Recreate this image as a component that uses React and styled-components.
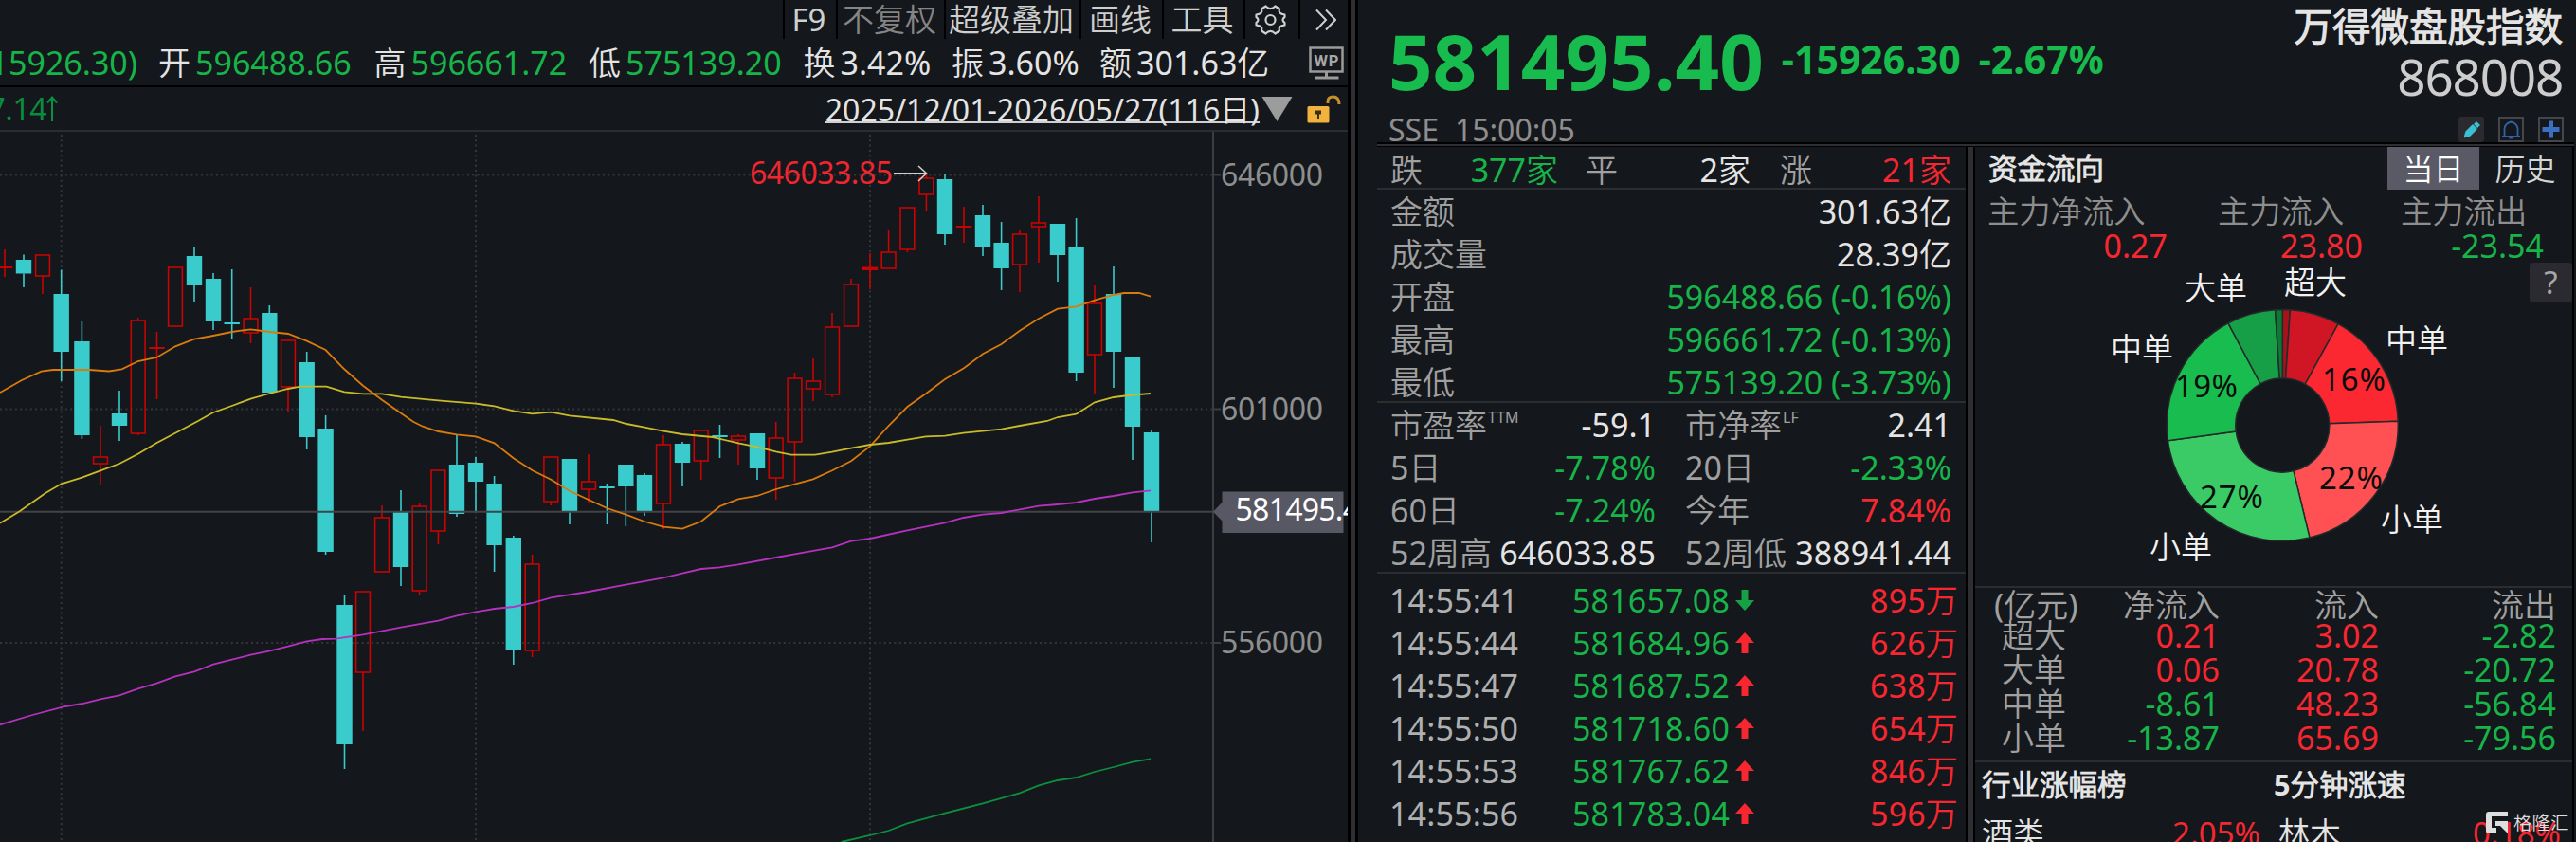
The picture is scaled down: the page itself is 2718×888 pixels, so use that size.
import React from "react";
import styled, { createGlobalStyle } from "styled-components";

const GREEN = "#17b44a";
const RED = "#f62730";
const WHITE = "#e4e4e4";
const GRAY = "#a0a0a0";
const DIM = "#8e8e8e";
const LINE = "#2c2d31";

const GlobalStyle = createGlobalStyle`
  html, body {
    margin: 0;
    padding: 0;
    background: #14171b;
  }

  * {
    box-sizing: border-box;
  }
`;

const Screen = styled.div`
  width: 2718px;
  height: 888px;

  display: flex;
  overflow: hidden;

  background: #14171b;
  color: ${WHITE};
  font-family: "Noto Sans", "Noto Sans CJK SC DemiLight", "Noto Sans CJK SC", sans-serif;
  font-size: 34px;
  font-weight: 400;
  line-height: 1;
  white-space: nowrap;
`;

const Text = styled.span`
  color: ${(props) => props.$color || "inherit"};
`;

/* ---------- left side: chart ---------- */

const ChartPane = styled.section`
  width: 1422px;
  flex: none;

  display: flex;
  flex-direction: column;
`;

const ToolBar = styled.div`
  height: 42px;

  display: flex;
  justify-content: flex-end;
`;

const Tool = styled.div`
  width: ${(props) => props.$w}px;
  height: 41px;
  padding-right: 3px;

  display: flex;
  align-items: center;
  justify-content: center;

  border-left: 2px solid #000000;
  color: ${(props) => (props.$off ? "#858585" : "#cfcfcf")};
  font-size: 33px;
`;

const InfoBar = styled.div`
  height: 50px;

  display: grid;
  grid-template-columns: 145px 227.5px 226.5px 226.5px 156.5px 156px 200px 1fr;
  align-items: center;

  border-bottom: 2px solid #000000;
`;

const InfoCell = styled.div`
  padding-left: ${(props) => (props.$tail ? 0 : 22)}px;

  display: flex;
  justify-content: ${(props) => (props.$tail ? "flex-end" : "flex-start")};
  gap: 5px;
`;

const IconCell = styled.div`
  padding-right: 4px;

  display: flex;
  justify-content: flex-end;
`;

const RangeBar = styled.div`
  height: 47px;
  padding-right: 7px;

  display: flex;
  align-items: center;

  border-bottom: 2px solid ${LINE};
  font-size: 32px;
`;

const Average = styled.div`
  width: 61px;
  margin-right: auto;

  display: flex;
  align-items: center;
  justify-content: flex-end;

  color: #0a8c3e;
  font-size: 32px;
  letter-spacing: -0.5px;

  svg {
    flex: none;
  }
`;

const DateRange = styled.div`
  height: 29px;
  margin-top: 1px;

  border-bottom: 2px solid #d0d0d0;
  letter-spacing: 0.05px;
  line-height: 30px;
`;

const Rule = styled.div`
  width: ${(props) => (props.$thin ? 10 : 11)}px;
  flex: none;

  background: #2f2f33;
  border: solid #000000;
  border-width: 0 ${(props) => (props.$thin ? 2 : 3)}px 0 3px;
`;

/* ---------- right side: quote ---------- */

const QuotePane = styled.section`
  flex: 1;

  display: flex;
  flex-direction: column;
`;

const QuoteHead = styled.header`
  height: 155px;
  padding: 0 14px 0 32px;

  display: flex;
  justify-content: space-between;
`;

const HeadLine = styled.div`
  height: 5px;
  margin: -5px 2px 0 20px;

  border: solid #000000;
  border-width: 2px 0 1px;
  background: #2f2f33;
`;

const PriceLine = styled.div`
  height: 120px;
  padding-top: 18px;

  display: flex;
  gap: 19px;

  color: #18bb4d;
  font-weight: 700;
`;

const LastPrice = styled.div`
  font-size: 81.5px;
  line-height: 92px;
`;

const Change = styled.div`
  font-size: 41px;
  line-height: 89px;
`;

const Exchange = styled.div`
  display: flex;
  gap: 17px;

  color: ${DIM};
  font-size: 32px;
  line-height: 34px;
`;

const NameBlock = styled.div`
  display: flex;
  flex-direction: column;
  align-items: flex-end;
`;

const IndexName = styled.div`
  margin-top: 7px;

  font-size: 40.5px;
  font-weight: 700;
  line-height: 42px;
`;

const IndexCode = styled.div`
  margin: 4px 0 14px;

  color: #cdcdcd;
  font-size: 53px;
  letter-spacing: -1.2px;
  line-height: 56px;
`;

const HeadIcons = styled.div`
  margin-right: -1px;

  display: flex;
  gap: 15px;
`;

const HeadIcon = styled.div`
  width: 27px;
  height: 27px;

  display: flex;
  align-items: center;
  justify-content: center;

  background: ${(props) => (props.$filled ? "#2a2a2f" : "transparent")};
  border: ${(props) => (props.$filled ? "none" : "2px solid #46464a")};
  border-radius: ${(props) => (props.$filled ? 3 : 0)}px;
`;

const QuoteBody = styled.div`
  flex: 1;
  min-height: 0;

  display: flex;
`;

const Detail = styled.div`
  width: 641px;
  padding-left: 20px;
  flex: none;
`;

const DetailGroup = styled.div`
  height: ${(props) => props.$h}px;
  padding-top: ${(props) => props.$top || 0}px;

  border-bottom: ${(props) => (props.$last ? "none" : "2px solid " + LINE)};
`;

const DetailRow = styled.div`
  height: 45px;
  padding: 0 15px 0 14px;

  display: grid;
  grid-template-columns: ${(props) => props.$cols || "auto auto"};
  column-gap: ${(props) => props.$gap || 0}px;
  align-items: center;
`;

const Cell = styled.span`
  display: flex;
  justify-content: ${(props) => (props.$right ? "flex-end" : "flex-start")};

  color: ${(props) => props.$color || GRAY};
`;

const Pair = styled.div`
  display: flex;
  justify-content: space-between;
`;

const Sup = styled.sup`
  margin-left: 1px;
  align-self: flex-start;

  font-size: 16px;
  line-height: 18px;
`;

const TickRow = styled.div`
  height: 45px;
  padding: 0 8px 0 13px;

  display: grid;
  grid-template-columns: 193px 166px 1fr auto;
  align-items: center;

  color: #b0b0b0;
  letter-spacing: 0.15px;
`;

const Arrow = styled.svg`
  width: 20px;
  height: 22px;
  margin-left: 6px;

  fill: ${(props) => (props.$down ? "#17a046" : RED)};
  transform: ${(props) => (props.$down ? "rotate(180deg)" : "none")};
`;

/* ---------- fund flow column ---------- */

const Flow = styled.div`
  margin-right: 2px;
  flex: 1;

  display: flex;
  flex-direction: column;

  border-right: 2px solid #000000;
`;

const FlowHead = styled.div`
  height: 45px;
  padding: 0 1px 0 14px;

  display: flex;
  align-items: center;
`;

const FlowTitle = styled.div`
  flex: 1;

  font-size: 30.5px;
  font-weight: 700;
`;

const Tab = styled.div`
  width: 97px;
  height: 45px;

  background: ${(props) => (props.$active ? "#5a5a66" : "transparent")};
  color: ${(props) => (props.$active ? "#ffffff" : "#d6d6d6")};
  font-size: 32px;
  line-height: 45px;
  text-align: center;
`;

const FlowSums = styled.div`
  height: 77px;
  padding: 4px 30px 0 13px;

  display: grid;
  grid-template-columns: 190px 206px 1fr;
  grid-auto-rows: 73px;
  line-height: 37px;
`;

const FlowSum = styled.div`
  display: flex;
  flex-direction: column;
`;

const SumLabel = styled.span`
  padding-left: ${(props) => props.$indent}px;

  color: ${DIM};
  font-size: 33.3px;
`;

const SumValue = styled.span`
  color: ${(props) => props.$color};
  text-align: right;
`;

const DonutBox = styled.div`
  height: 341px;

  display: flex;
`;

const Help = styled.div`
  width: 45px;
  height: 42px;
  margin-left: -45px;

  background: #2a2a30;
  border-radius: 4px;
  color: #a6a6a6;
  font-size: 33px;
  line-height: 42px;
  text-align: center;
`;

const FlowTable = styled.div`
  height: 186px;
  padding: 4px 17px 0 20px;

  display: grid;
  grid-template-columns: 76px 162px 168px 1fr;
  grid-template-rows: 28px 36px 36px 36px 36px;
  align-items: center;

  border: solid ${LINE};
  border-width: 2px 0;
`;

const Board = styled.div`
  padding: 6px 12px 0 7px;

  display: grid;
  grid-template-columns: 294px 14px 1fr;
  font-size: 33px;
  line-height: 64px;
`;

const BoardTitle = styled.div`
  grid-column: ${(props) => (props.$first ? "1" : "3")};
  height: 37px;

  font-size: 30.5px;
  font-weight: 700;
  line-height: 34px;
`;

const BoardItem = styled.div`
  grid-column: ${(props) => (props.$first ? "1" : "3")};
  height: 30px;
  padding-left: ${(props) => (props.$first ? 0 : 5)}px;

  display: flex;
  justify-content: space-between;
`;

const Watermark = styled.div`
  position: absolute;
  left: 2622px;
  top: 855px;

  display: flex;
  align-items: center;
  gap: 5px;

  color: #dedede;
  font-size: 19.5px;
  font-weight: 500;
  line-height: 24px;
`;

// x, high, body top, body bottom, low, rising
const CANDLES = [
  [5, 263, 282, 282, 292, 1],
  [25, 268.5, 274, 288.5, 303, 0],
  [45, 269, 269, 291, 310, 1],
  [64.7, 284.5, 310, 371, 402, 0],
  [86.4, 339, 360, 459, 463, 0],
  [106, 449, 482, 489, 511, 1],
  [126, 412, 436, 449, 465, 0],
  [145.7, 335, 338, 457, 459, 1],
  [165.5, 350, 367, 367, 421, 1],
  [185, 282, 282, 344, 344, 1],
  [205, 261, 270, 301, 319, 0],
  [225, 288, 294, 339, 348, 0],
  [244.7, 284, 341, 341, 357, 0],
  [264.5, 303, 336, 351, 362, 1],
  [284.3, 322, 330, 414, 414, 0],
  [304, 357, 359, 408, 434, 1],
  [323.7, 371, 382, 461, 474, 0],
  [343.6, 438, 452, 582, 585, 0],
  [363.5, 628, 638, 785, 811, 0],
  [383, 624, 624, 709, 771, 1],
  [403, 533, 546, 603, 603, 1],
  [423, 517, 540, 598, 618, 0],
  [442.6, 530, 534, 623, 628, 1],
  [462.4, 496, 496, 560, 574, 1],
  [482, 458, 490, 542, 545, 0],
  [502, 482, 488, 508, 539, 0],
  [521.6, 502, 510, 575, 603, 0],
  [541.8, 565, 567, 686, 701, 0],
  [561.6, 585, 595, 686, 693, 1],
  [581.3, 482, 482, 529, 533, 1],
  [601, 484, 484, 539, 553, 0],
  [621, 479, 508, 516, 531, 1],
  [640.5, 510, 514, 514, 553, 0],
  [660.3, 490, 490, 513, 555, 0],
  [680, 499, 501, 539, 544, 0],
  [700, 459, 469, 531, 558, 1],
  [720, 466, 468, 488, 513, 0],
  [739.7, 454, 454, 486, 506, 1],
  [759.5, 448, 460, 460, 483, 0],
  [779, 458, 460, 464, 490, 1],
  [799, 457, 457, 494, 506, 0],
  [818.7, 445, 462, 504, 527, 1],
  [838.5, 393, 399, 466, 508, 1],
  [858, 378, 402, 410, 423, 1],
  [878, 330, 345, 416, 419, 1],
  [898, 294, 300, 344, 344, 1],
  [918, 267, 282.5, 284, 305, 1],
  [937.6, 243, 266, 283, 283, 1],
  [957.4, 219, 219, 263, 266, 1],
  [977.4, 184, 188, 205, 223, 1],
  [997, 184, 189, 247, 258, 0],
  [1017, 218, 239, 239, 256, 1],
  [1037, 216, 227, 260, 270, 0],
  [1056.6, 234, 256, 283, 306, 0],
  [1076, 243, 247, 279, 308, 1],
  [1096, 207, 235, 239, 277, 1],
  [1116, 236, 236, 269, 297, 0],
  [1135.6, 230, 261, 393, 402, 0],
  [1155, 301, 320, 374, 416, 1],
  [1175, 281, 310, 371, 409, 0],
  [1195, 376, 376, 450, 485, 0],
  [1215, 454, 456, 539, 572, 0],
];

const AVERAGES = [
  {
    color: "#d97b0c",
    points:
      "0,414 23,401 43.6,391.7 56,390 94,390 115,391.5 128.6,389.3 145.6,381 165.3,377 185,365.3 205,357.7 225,354 244.7,350 264.5,347.3 284.3,350 304,352 323.7,359.7 343.5,369 363.2,389.3 383,406.7 403,421.7 423,435.7 436,444.7 446,449.7 462.4,455 482,458.3 502,460.3 521.6,467.3 541.8,483.3 561.6,496 581.3,505.7 601,517.7 621,527 640.5,536 660.3,542.7 680,550 700,555.7 720,557.7 739.7,550 759.5,534 779,526.3 799,523 818.7,516 838.5,510.7 858,505.3 878,496.3 898,486.3 918,470.7 937.6,449 957.4,429 977.4,414.7 997,400 1017,388.3 1037,373.3 1056.6,363 1076,348.7 1096,336 1116,325.7 1135.6,323.3 1155,316.7 1175,311 1186,309 1202,309 1214,312.7",
  },
  {
    color: "#c8ba2a",
    points:
      "0,551.7 20.7,539.3 48,520 64.7,510.3 86.4,503.7 106,496.3 126,489 145.6,478.7 165.5,467 185,456.7 209,444 225,435 244.7,428 264.5,420.7 284.3,415 304,410 317,407.7 344.4,407.7 363.2,413.3 383,415.3 403,415.3 423,418.7 462.4,422.3 502,425.7 521.6,428.3 541.8,433.3 561.6,436.3 581.3,434.7 601,438.3 647,443 661,447 680,450.7 700,454.7 720,458 752,461 779,467.3 799,471.3 818.7,476.3 834.8,479.7 860,479.7 878,476.7 898,472.7 918,469 937.6,467 957.4,463.7 977,460.3 997,459.7 1016.6,456.7 1056.6,452.7 1076,449 1105,444 1116,440 1135.6,436.7 1155,424.3 1175,419 1195,416.5 1214,415",
  },
  {
    color: "#b432bd",
    points:
      "0,764.3 34.4,754 69,745 87,742 106,737.3 126,733.3 145.6,726.3 165.3,720.7 185,713.3 205,708.3 225,700.7 244.7,695.7 264.5,690.7 284,686.7 304,681.7 323.7,676.3 340,674 354,673.7 383,669.3 423,661.7 462.4,654.7 482,649.3 502,645.3 521.6,642 541.8,640 561.6,636 581.3,630.3 621,624 660.3,616.7 700,609.3 720,604.7 739.7,600 759.5,598.3 779,595.3 818.7,588 838.5,584.3 878,577.3 898,570.7 918,568 957.4,559.3 997,551.3 1016.6,546 1037,542.7 1056.6,541 1076,537.3 1096,533.7 1116,532 1135.6,530 1155,526 1175,523 1195,519.3 1214,517.3",
  },
  {
    color: "#0c8f3e",
    points:
      "887.6,888 918,881 937.6,876 957.4,868.3 997,857.7 1037,847.3 1076,836.3 1096,828.3 1116,823 1135.6,820 1155,814 1175,809 1195,803.7 1214,800.3",
  },
];

const Candle = ({ data }) => {
  const [x, high, top, bottom, low, rising] = data;
  const color = rising ? "#c60404" : "#3acbcc";

  if (bottom - top < 2) {
    return (
      <g fill={color}>
        <rect x={x - 0.8} y={high} width="1.6" height={low - high} />
        <rect x={x - 8.2} y={top - 1} width="16.4" height={bottom - top + 2} />
      </g>
    );
  }

  return (
    <g>
      <rect x={x - 0.8} y={high} width="1.6" height={top - high} fill={color} />
      <rect x={x - 0.8} y={bottom} width="1.6" height={low - bottom} fill={color} />
      {rising ? (
        <rect x={x - 7.4} y={top} width="14.8" height={bottom - top} fill="none" stroke={color} strokeWidth="1.6" />
      ) : (
        <rect x={x - 8.2} y={top} width="16.4" height={bottom - top} fill={color} />
      )}
    </g>
  );
};

const PriceChart = () => (
  <svg width="1424" height="749" viewBox="0 139 1424 749" fontSize="32">
    <g stroke="#35363a" strokeWidth="2" strokeDasharray="2 3.3">
      <path d="M0 184.5H1280M0 431.5H1280M0 678H1280" />
      <path d="M64.7 142V888M502 142V888M918 142V888" />
    </g>
    <path d="M1280 139V888M1280 184.5h8M1280 431.5h8M1280 678h8" stroke="#3d3d41" strokeWidth="2" />

    {CANDLES.map((candle) => (
      <Candle key={candle[0]} data={candle} />
    ))}
    <path d="M0 539.7H1282" stroke="#434347" strokeWidth="2" />
    {AVERAGES.map((line) => (
      <polyline key={line.color} points={line.points} fill="none" stroke={line.color} strokeWidth="1.8" />
    ))}

    <text x="791" y="194" fill="#ee2630" textLength="151">646033.85</text>
    <path d="M943 182.7H977M969 175l8.5 7.7l-8.5 8.3" fill="none" stroke="#cfcfcf" strokeWidth="1.6" />

    <g fill={DIM}>
      <text x="1288" y="195.5" textLength="108">646000</text>
      <text x="1288" y="442.5" textLength="108">601000</text>
      <text x="1288" y="689" textLength="108">556000</text>
    </g>

    <path d="M1280 539.7L1289.5 529.7V518.5H1417.5V562H1289.5V549.5Z" fill="#585864" />
    <text x="1303.5" y="549" fill="#ffffff" textLength="149">581495.40</text>
  </svg>
);

const GearIcon = () => (
  <svg width="33" height="32" viewBox="0 0 33 32" fill="none" stroke="#cfcfcf" strokeWidth="2.2">
    <path d="M11.5 1.5Q16.5 6.5 21.5 1.5L26 4.5Q24 9.5 31.5 10.5V13Q27.5 16 31.5 19V21.5Q24 22.5 26 27.5L21.5 30.5Q16.5 25.5 11.5 30.5L7 27.5Q9 22.5 1.5 21.5V19Q5.5 16 1.5 13V10.5Q9 9.5 7 4.5Z" strokeLinejoin="round" />
    <circle cx="16.5" cy="16" r="5" />
  </svg>
);

const MoreIcon = () => (
  <svg width="28" height="24" viewBox="-5 0 28 24" fill="none" stroke="#cfcfcf" strokeWidth="2">
    <path d="M2 1.5L12 12L2 22.5M12 1.5L22 12L12 22.5" />
  </svg>
);

const TerminalIcon = () => (
  <svg width="37" height="36" viewBox="0 0 37 36">
    <rect x="1.5" y="2.5" width="34" height="25" fill="none" stroke="#9b9b9b" strokeWidth="2.5" />
    <path d="M18.5 28V33M6 34H31.5" stroke="#9b9b9b" strokeWidth="3" />
    <text x="18.5" y="21.5" fill="#a8a8a8" fontSize="16.5" fontWeight="700" textAnchor="middle" fontFamily="Roboto" textLength="26">WP</text>
  </svg>
);

const LockIcon = () => (
  <svg width="36" height="30" viewBox="0 0 36 30">
    <path d="M22 9V7Q22 2 27.5 2Q34 2 34 10" fill="none" stroke="#c58f2b" strokeWidth="3" />
    <rect x="0.5" y="12" width="23" height="17.5" rx="1.5" fill="#f1b33d" />
    <path d="M9 16.5h6v4h-2v5h-2v-5h-2z" fill="#3a2f16" />
  </svg>
);

const slices = [
  [0, 3.8, "#a8131b"],
  [3.8, 28.8, "#d01624"],
  [28.8, 88, "#fb2832"],
  [88, 166.4, "#ff5153"],
  [166.4, 262.4, "#3acb66"],
  [262.4, 332, "#19bc4f"],
  [332, 356.4, "#179f48"],
  [356.4, 360, "#0a7a34"],
];

const slicePath = (from, to) => {
  const at = (deg, r) => {
    const a = (deg * Math.PI) / 180;
    return `${324.3 + r * Math.sin(a)} ${171.5 - r * Math.cos(a)}`;
  };

  return `M${at(from, 122)}A122 122 0 0 1 ${at(to, 122)}L${at(to, 49.5)}A49.5 49.5 0 0 0 ${at(from, 49.5)}Z`;
};

const Donut = () => (
  <svg width="630" height="341" viewBox="0 0 630 341" fontSize="33">
    {slices.map(([from, to, color]) => (
      <path key={from} d={slicePath(from, to)} fill={color} stroke="#232a2b" strokeWidth="1.5" />
    ))}
    <g fill="#f2f2f2">
      <text x="221" y="38.5">大单</text>
      <text x="326" y="33">超大</text>
      <text x="143" y="103">中单</text>
      <text x="433" y="94">中单</text>
      <text x="428" y="283">小单</text>
      <text x="184" y="312">小单</text>
    </g>
    <g fill="#0a0d0b">
      <text x="211" y="141.5" textLength="66">19%</text>
      <text x="366" y="134.5" textLength="67">16%</text>
      <text x="363" y="239" textLength="67">22%</text>
      <text x="237" y="258.5" textLength="67">27%</text>
    </g>
  </svg>
);

const info = [
  ["开", "596488.66", GREEN],
  ["高", "596661.72", GREEN],
  ["低", "575139.20", GREEN],
  ["换", "3.42%"],
  ["振", "3.60%"],
  ["额", "301.63亿"],
];

const summary = [
  ["金额", "301.63亿", WHITE],
  ["成交量", "28.39亿", WHITE],
  ["开盘", "596488.66 (-0.16%)", GREEN],
  ["最高", "596661.72 (-0.13%)", GREEN],
  ["最低", "575139.20 (-3.73%)", GREEN],
];

const ratios = [
  [
    ["市盈率", "-59.1", WHITE, "TTM"],
    ["市净率", "2.41", WHITE, "LF"],
  ],
  [
    ["5日", "-7.78%", GREEN],
    ["20日", "-2.33%", GREEN],
  ],
  [
    ["60日", "-7.24%", GREEN],
    ["今年", "7.84%", RED],
  ],
  [
    ["52周高", "646033.85", WHITE],
    ["52周低", "388941.44", WHITE],
  ],
];

const ticks = [
  ["14:55:41", "581657.08", "895万", true],
  ["14:55:44", "581684.96", "626万"],
  ["14:55:47", "581687.52", "638万"],
  ["14:55:50", "581718.60", "654万"],
  ["14:55:53", "581767.62", "846万"],
  ["14:55:56", "581783.04", "596万"],
];

const flowRows = [
  ["超大", "0.21", "3.02", "-2.82"],
  ["大单", "0.06", "20.78", "-20.72"],
  ["中单", "-8.61", "48.23", "-56.84"],
  ["小单", "-13.87", "65.69", "-79.56"],
];

const signColor = (value) => (value.startsWith("-") ? GREEN : RED);

const ChartSide = () => (
  <ChartPane>
    <ToolBar>
      <Tool $w={56}>F9</Tool>
      <Tool $w={114} $off>不复权</Tool>
      <Tool $w={143}>超级叠加</Tool>
      <Tool $w={87}>画线</Tool>
      <Tool $w={86}>工具</Tool>
      <Tool $w={58}><GearIcon /></Tool>
      <Tool $w={52}><MoreIcon /></Tool>
    </ToolBar>

    <InfoBar>
      <InfoCell $tail><Text $color={GREEN}>15926.30)</Text></InfoCell>
      {info.map(([label, value, color]) => (
        <InfoCell key={label}>
          <Text>{label}</Text>
          <Text $color={color}>{value}</Text>
        </InfoCell>
      ))}
      <IconCell><TerminalIcon /></IconCell>
    </InfoBar>

    <RangeBar>
      <Average>
        7.14
        <svg width="12" height="28" viewBox="0 0 12 28" fill="none" stroke="#0a9040" strokeWidth="2">
          <path d="M6 27V2M1 7.5L6 1.5L11 7.5" />
        </svg>
      </Average>
      <DateRange>2025/12/01-2026/05/27(116日)</DateRange>
      <svg width="50" height="28" viewBox="0 0 50 28"><path d="M2.5 1H34.5L18.5 27Z" fill="#9c9c9c" /></svg>
      <LockIcon />
    </RangeBar>

    <PriceChart />
  </ChartPane>
);

const DetailColumn = () => (
  <Detail>
    <DetailGroup $h={45} $top={1}>
      <DetailRow $cols="38px 139px 29px 35px 139px 31px 31px 1fr">
        <Cell>跌</Cell>
        <Cell $right $color={GREEN}>377家</Cell>
        <span />
        <Cell>平</Cell>
        <Cell $right $color={WHITE}>2家</Cell>
        <span />
        <Cell>涨</Cell>
        <Cell $right $color={RED}>21家</Cell>
      </DetailRow>
    </DetailGroup>

    <DetailGroup $h={225}>
      {summary.map(([label, value, color]) => (
        <DetailRow key={label}>
          <Cell>{label}</Cell>
          <Cell $right $color={color}>{value}</Cell>
        </DetailRow>
      ))}
    </DetailGroup>

    <DetailGroup $h={180}>
      {ratios.map((pairs) => (
        <DetailRow key={pairs[0][0]} $cols="280px 281px" $gap={31}>
          {pairs.map(([label, value, color, sup]) => (
            <Pair key={label}>
              <Cell>{label}{sup && <Sup>{sup}</Sup>}</Cell>
              <Cell $color={color}>{value}</Cell>
            </Pair>
          ))}
        </DetailRow>
      ))}
    </DetailGroup>

    <DetailGroup $last $h={283} $top={5}>
      {ticks.map(([time, price, volume, down]) => (
        <TickRow key={time}>
          <Text>{time}</Text>
          <Text $color={GREEN}>{price}</Text>
          <Arrow $down={down} viewBox="0 0 20 22"><path d="M10 0L20 11H13.5V22H6.5V11H0Z" /></Arrow>
          <Text $color={RED}>{volume}</Text>
        </TickRow>
      ))}
    </DetailGroup>
  </Detail>
);

const FlowColumn = () => (
  <Flow>
    <FlowHead>
      <FlowTitle>资金流向</FlowTitle>
      <Tab $active>当日</Tab>
      <Tab>历史</Tab>
    </FlowHead>

    <FlowSums>
      <FlowSum>
        <SumLabel $indent={0}>主力净流入</SumLabel>
        <SumValue $color={RED}>0.27</SumValue>
      </FlowSum>
      <FlowSum>
        <SumLabel $indent={53}>主力流入</SumLabel>
        <SumValue $color={RED}>23.80</SumValue>
      </FlowSum>
      <FlowSum>
        <SumLabel $indent={40}>主力流出</SumLabel>
        <SumValue $color={GREEN}>-23.54</SumValue>
      </FlowSum>
    </FlowSums>

    <DonutBox>
      <Donut />
      <Help>?</Help>
    </DonutBox>

    <FlowTable>
      <Cell>(亿元)</Cell>
      <Cell $right>净流入</Cell>
      <Cell $right>流入</Cell>
      <Cell $right>流出</Cell>
      {flowRows.map(([label, net, inflow, outflow]) => (
        <React.Fragment key={label}>
          <Cell $right>{label}</Cell>
          <Cell $right $color={signColor(net)}>{net}</Cell>
          <Cell $right $color={signColor(inflow)}>{inflow}</Cell>
          <Cell $right $color={signColor(outflow)}>{outflow}</Cell>
        </React.Fragment>
      ))}
    </FlowTable>

    <Board>
      <BoardTitle $first>行业涨幅榜</BoardTitle>
      <BoardTitle>5分钟涨速</BoardTitle>
      <BoardItem $first>
        <Text>酒类</Text>
        <Text $color={RED}>2.05%</Text>
      </BoardItem>
      <BoardItem>
        <Text>林木</Text>
        <Text $color={RED}>0.18%</Text>
      </BoardItem>
    </Board>
  </Flow>
);

export default function App() {
  return (
    <>
      <GlobalStyle />
      <Screen>
        <ChartSide />
        <Rule />

        <QuotePane>
          <QuoteHead>
            <div>
              <PriceLine>
                <LastPrice>581495.40</LastPrice>
                <Change>-15926.30</Change>
                <Change>-2.67%</Change>
              </PriceLine>
              <Exchange>
                <span>SSE</span>
                <span>15:00:05</span>
              </Exchange>
            </div>

            <NameBlock>
              <IndexName>万得微盘股指数</IndexName>
              <IndexCode>868008</IndexCode>
              <HeadIcons>
                <HeadIcon $filled>
                  <svg width="20" height="20" viewBox="0 0 20 20">
                    <path d="M2.5 17.5L4 12L11 5L15 9L8 16Z" fill="#3bbfd3" stroke="#3bbfd3" strokeWidth="1.5" strokeLinejoin="round" />
                    <path d="M13.5 2.5L17.5 6.5" stroke="#3bbfd3" strokeWidth="4" />
                  </svg>
                </HeadIcon>
                <HeadIcon>
                  <svg width="21" height="21" viewBox="0 0 21 21" fill="none" stroke="#2f62ab" strokeWidth="1.8">
                    <path d="M1 18H20M3.5 17.5V10Q4 4 10.5 2.5Q17 4 17.5 10V17.5M8.5 19.5H12.5" />
                  </svg>
                </HeadIcon>
                <HeadIcon>
                  <svg width="19" height="19" viewBox="0 0 19 19" stroke="#3b6fc0" strokeWidth="5">
                    <path d="M9.5 0.5V18.5M0.5 9.5H18.5" />
                  </svg>
                </HeadIcon>
              </HeadIcons>
            </NameBlock>
          </QuoteHead>
          <HeadLine />

          <QuoteBody>
            <DetailColumn />
            <Rule $thin />
            <FlowColumn />
          </QuoteBody>
        </QuotePane>

        <Watermark>
          <svg width="25" height="25" viewBox="0 0 25 25" fill="#dedede">
            <path d="M4 1H24V6H7V18H12V24H4Q1 24 1 21V4Q1 1 4 1Z" />
            <path d="M11 11H24V24L16 16H11Z" />
          </svg>
          格隆汇
        </Watermark>
      </Screen>
    </>
  );
}
